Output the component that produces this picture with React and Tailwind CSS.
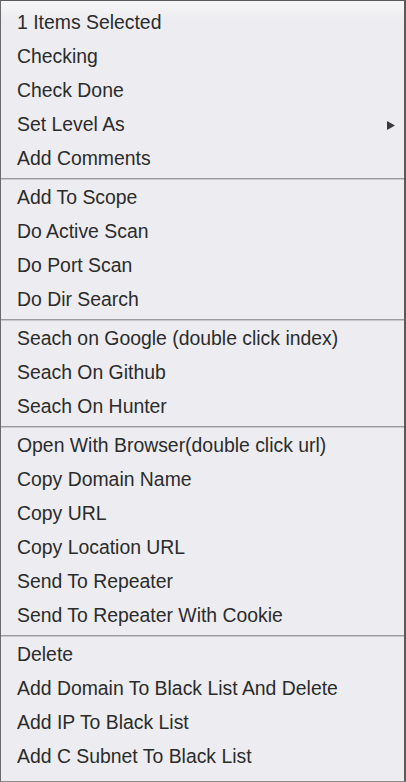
const SECTIONS = [
  ['1 Items Selected', 'Checking', 'Check Done', 'Set Level As', 'Add Comments'],
  ['Add To Scope', 'Do Active Scan', 'Do Port Scan', 'Do Dir Search'],
  ['Seach on Google (double click index)', 'Seach On Github', 'Seach On Hunter'],
  [
    'Open With Browser(double click url)',
    'Copy Domain Name',
    'Copy URL',
    'Copy Location URL',
    'Send To Repeater',
    'Send To Repeater With Cookie',
  ],
  ['Delete', 'Add Domain To Black List And Delete', 'Add IP To Black List', 'Add C Subnet To Black List'],
]

function MenuItem({ label }) {
  return (
    <div className="h-[34px] flex items-center justify-between pl-4 pr-[9px]">
      <span>{label}</span>
      {label === 'Set Level As' && (
        <svg width="8" height="9" viewBox="0 0 8 9" className="mt-[1px]">
          <path d="M0 0 L8 4.5 L0 9 Z" fill="#3a3a3a" />
        </svg>
      )}
    </div>
  )
}

export default function App() {
  return (
    <div
      className="w-[406px] h-[782px] bg-[#ededf1] bg-gradient-to-b from-[#f6f6f8] to-[#ededf1] bg-[length:100%_18px] bg-no-repeat border-t border-l border-b border-r-2 border-t-[#5a5a5a] border-l-[#6a6a6a] border-r-[#5a5a5a] border-b-[#8a8a8a] pt-[5px] text-[19.4px] text-[#2b2b2b] overflow-hidden"
      style={{ fontFamily: '"Liberation Sans", Arial, sans-serif' }}
    >
      {SECTIONS.map((items, i) => (
        <div key={i}>
          {i > 0 && (
            <div className="h-[5px] pt-[2px]">
              <div className="h-px bg-[#9b9b9e]" />
              <div className="h-px bg-[#c9c9cc]" />
            </div>
          )}
          {items.map((label) => (
            <MenuItem key={label} label={label} />
          ))}
        </div>
      ))}
    </div>
  )
}
